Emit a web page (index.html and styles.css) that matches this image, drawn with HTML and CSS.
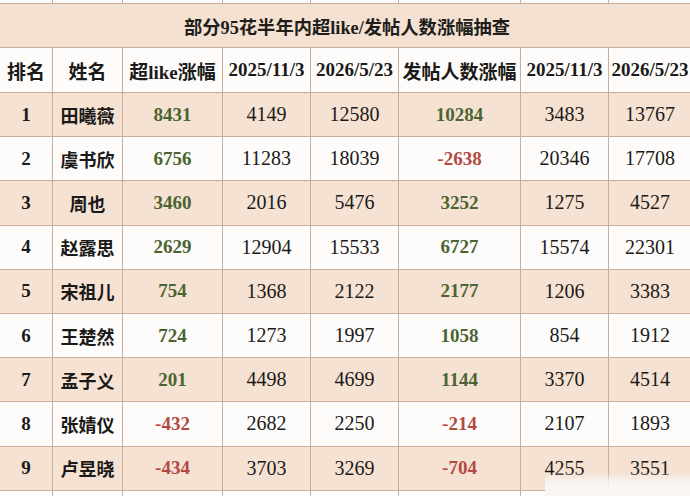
FILE: index.html
```html
<!DOCTYPE html>
<html lang="zh-CN">
<head>
<meta charset="utf-8">
<title>部分95花半年内超like/发帖人数涨幅抽查</title>
<link rel="stylesheet" href="styles.css">
</head>
<body>
<div class="sheet">
  <div class="grid">
    <div class="strip"></div><div class="strip"></div><div class="strip"></div><div class="strip"></div>
    <div class="strip"></div><div class="strip"></div><div class="strip"></div><div class="strip"></div>

    <div class="title">部分95花半年内超like/发帖人数涨幅抽查</div>

    <div class="hd">排名</div><div class="hd">姓名</div><div class="hd">超like涨幅</div><div class="hd">2025/11/3</div>
    <div class="hd">2026/5/23</div><div class="hd">发帖人数涨幅</div><div class="hd">2025/11/3</div><div class="hd">2026/5/23</div>

    <div class="c rk p">1</div><div class="c nm p">田曦薇</div><div class="c up p">8431</div><div class="c p">4149</div><div class="c p">12580</div><div class="c up p">10284</div><div class="c p">3483</div><div class="c p">13767</div>
    <div class="c rk">2</div><div class="c nm">虞书欣</div><div class="c up">6756</div><div class="c">11283</div><div class="c">18039</div><div class="c dn">-2638</div><div class="c">20346</div><div class="c">17708</div>
    <div class="c rk p">3</div><div class="c nm p">周也</div><div class="c up p">3460</div><div class="c p">2016</div><div class="c p">5476</div><div class="c up p">3252</div><div class="c p">1275</div><div class="c p">4527</div>
    <div class="c rk">4</div><div class="c nm">赵露思</div><div class="c up">2629</div><div class="c">12904</div><div class="c">15533</div><div class="c up">6727</div><div class="c">15574</div><div class="c">22301</div>
    <div class="c rk p">5</div><div class="c nm p">宋祖儿</div><div class="c up p">754</div><div class="c p">1368</div><div class="c p">2122</div><div class="c up p">2177</div><div class="c p">1206</div><div class="c p">3383</div>
    <div class="c rk">6</div><div class="c nm">王楚然</div><div class="c up">724</div><div class="c">1273</div><div class="c">1997</div><div class="c up">1058</div><div class="c">854</div><div class="c">1912</div>
    <div class="c rk p">7</div><div class="c nm p">孟子义</div><div class="c up p">201</div><div class="c p">4498</div><div class="c p">4699</div><div class="c up p">1144</div><div class="c p">3370</div><div class="c p">4514</div>
    <div class="c rk">8</div><div class="c nm">张婧仪</div><div class="c dn">-432</div><div class="c">2682</div><div class="c">2250</div><div class="c dn">-214</div><div class="c">2107</div><div class="c">1893</div>
    <div class="c rk p">9</div><div class="c nm p">卢昱晓</div><div class="c dn p">-434</div><div class="c p">3703</div><div class="c p">3269</div><div class="c dn p">-704</div><div class="c p">4255</div><div class="c p">3551</div>
    <div class="c"></div><div class="c"></div><div class="c"></div><div class="c"></div><div class="c"></div><div class="c"></div><div class="c"></div><div class="c"></div>
  </div>
  <div class="mark"></div>
</div>
</body>
</html>
```
FILE: styles.css
```css
html, body {
  margin: 0;
  padding: 0;
  background: #fdfcfa;
  overflow: hidden;
}

.sheet {
  position: relative;
  width: 690px;
  height: 496px;
  overflow: hidden;
}

.grid {
  display: grid;
  grid-template-columns: 52px 69px 99px 87px 87px 121px 87px 82px;
  grid-template-rows: 3px 43px 44px repeat(9, 43.2px) 20px;
  gap: 1px;
  background: #c9af9b;
  width: 691px;
  font-family: "Liberation Serif", "Noto Sans CJK SC", serif;
  color: #1b1a18;
}

.strip {
  background: #fbfaf8;
}

.title {
  grid-column: 1 / -1;
  background: #f5e1d1;
  display: flex;
  align-items: center;
  padding-left: 184px;
  font-size: 18.3px;
  font-weight: 700;
  color: #201d1a;
}

.hd {
  background: #fdfcfa;
  display: flex;
  align-items: center;
  justify-content: center;
  font-size: 19px;
  font-weight: 700;
  white-space: nowrap;
}

.c {
  background: #fdfcfa;
  display: flex;
  align-items: center;
  justify-content: center;
  font-size: 20px;
  white-space: nowrap;
}

.c.p {
  background: #f6e2d3;
}

.rk {
  font-weight: 700;
  font-size: 19px;
}

.nm {
  font-family: "Noto Sans CJK SC", sans-serif;
  font-weight: 600;
  font-size: 18px;
}

.up {
  font-weight: 700;
  font-size: 19px;
  color: #4b6431;
}

.dn {
  font-weight: 700;
  font-size: 19px;
  color: #b24a42;
}

.mark {
  position: absolute;
  left: 545px;
  top: 472px;
  width: 145px;
  height: 24px;
  background: linear-gradient(to bottom, rgba(250, 248, 246, 0) 0%, rgba(250, 248, 246, 0.85) 45%, #f8f7f6 100%);
}
```
